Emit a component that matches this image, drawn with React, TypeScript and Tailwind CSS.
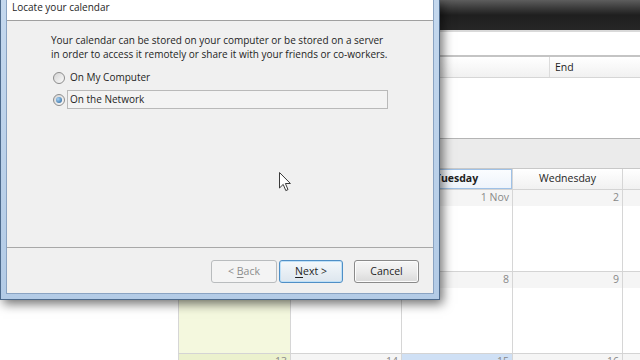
import React from 'react';

const ui = "font-['Open_Sans','Noto_Sans',sans-serif]";

const Radio = ({ checked }: { checked?: boolean }) => (
  <span className="w-[12px] h-[12px] shrink-0 rounded-full border border-[#8c8c8c] bg-gradient-to-br from-[#d4d4d4] to-[#fbfbfb] flex items-center justify-center">
    {checked && (
      <span className="w-[6px] h-[6px] rounded-full bg-[radial-gradient(circle_at_35%_35%,#a7d3f5,#235f98)]" />
    )}
  </span>
);

const WizardButton = ({
  label,
  accessKey,
  rest,
  kind,
}: {
  label?: string;
  accessKey?: string;
  rest?: string;
  kind: 'disabled' | 'default' | 'normal';
}) => {
  const look =
    kind === 'disabled'
      ? 'border-[#b9bcbe] bg-[#f4f4f4] text-[#8d8d8d]'
      : kind === 'default'
        ? 'border-[#4f8fc6] bg-gradient-to-b from-[#f4f8fb] to-[#dde6ee] text-[#1e1e1e] shadow-[inset_0_0_0_1px_#bfe0f7]'
        : 'border-[#8a8a8a] bg-gradient-to-b from-[#f6f6f6] via-[#ebebeb] to-[#dadada] text-[#1e1e1e] shadow-[inset_0_0_0_1px_#fcfcfc]';
  return (
    <button
      type="button"
      className={`w-full h-[23px] rounded-[3px] border text-[10.5px] leading-none flex items-center justify-center ${look}`}
    >
      <span className="whitespace-pre">
        {label}
        {accessKey && <span className="underline underline-offset-[2px]">{accessKey}</span>}
        {rest}
      </span>
    </button>
  );
};

const Cursor = () => (
  <svg width="13" height="20" viewBox="0 0 13 20" className="absolute left-[279px] top-[172px]">
    <path
      d="M0.5 0.5 L0.5 16 L4.2 12.4 L6.8 18.6 L9 17.6 L6.4 11.5 L11.4 11.5 Z"
      fill="#ffffff"
      stroke="#3a3a3a"
      strokeWidth="1"
      strokeLinejoin="round"
    />
  </svg>
);

type Cell = { n: string; tone?: 'weekend' | 'today' };

// cells under the wizard or past the right edge carry no text
const weeks: Cell[][] = [
  [{ n: '', tone: 'weekend' }, { n: '' }, { n: '1 Nov' }, { n: '2' }, { n: '' }],
  [{ n: '', tone: 'weekend' }, { n: '' }, { n: '8' }, { n: '9' }, { n: '' }],
  [{ n: '13', tone: 'weekend' }, { n: '14' }, { n: '15', tone: 'today' }, { n: '16' }, { n: '' }],
];

const days = ['', '', 'Tuesday', 'Wednesday', ''];
const colWidths = ['w-[112px]', 'w-[111px]', 'w-[111px]', 'w-[110px]', 'w-[111px]'];

export default function App() {
  return (
    <div className={`relative w-[640px] h-[360px] overflow-hidden bg-white ${ui}`}>
      {/* calendar app behind the wizard */}
      <div className="flex flex-col h-full">
        <div className="h-[30px] shrink-0 bg-gradient-to-b from-[#5e5e5e] via-[#1f1f1f] to-[#262626]" />
        <div className="h-[27px] shrink-0 border-t-2 border-[#d9d9d9] border-b-2 border-b-[#c4c4c4] bg-white" />
        <div className="h-[21px] shrink-0 flex border-b border-[#d6d6d6] bg-gradient-to-b from-[#ffffff] to-[#f1f1f1] text-[10.5px] text-[#1e1e1e]">
          <div className="w-[550px] shrink-0 border-r border-[#dcdcdc]" />
          <div className="pl-[5px] flex items-center pt-[2px]">End</div>
        </div>
        <div className="h-[60px] shrink-0 bg-white" />
        <div className="h-[30px] shrink-0 border-t border-[#b4b4b4] bg-[#ebebeb]" />
        <div className="flex-1 flex min-h-0">
          <div className="w-[178px] shrink-0 bg-white" />
          <div className="flex flex-col">
            <div className="h-[21px] shrink-0 flex border-t border-[#c8c8c8] text-[10.5px] text-[#1e1e1e]">
              {days.map((d, i) => (
                <div
                  key={i}
                  className={`${colWidths[i]} shrink-0 flex items-center justify-center border-l ${
                    d === 'Tuesday'
                      ? 'font-bold border border-[#9fc1e6] bg-gradient-to-b from-[#fbfdff] to-[#eef4fb]'
                      : 'border-[#d6d6d6] bg-gradient-to-b from-[#ffffff] to-[#f1f1f1]'
                  }`}
                >
                  {d}
                </div>
              ))}
            </div>
            {weeks.map((w, wi) => (
              <div key={wi} className="h-[82px] shrink-0 flex border-t border-[#d4d4d4]">
                {w.map((c, ci) => (
                  <div
                    key={ci}
                    className={`${colWidths[ci]} shrink-0 flex flex-col border-l border-[#d6d6d6] ${
                      c.tone === 'weekend' ? 'bg-[#f4f8de]' : 'bg-white'
                    }`}
                  >
                    <div
                      className={`h-[16px] flex items-center justify-end pr-[3px] text-[10.5px] text-[#888888] ${
                        c.tone === 'weekend'
                          ? 'bg-[#ebf1cd]'
                          : c.tone === 'today'
                            ? 'bg-[#cfe0f5] text-[#6b7a8c]'
                            : 'bg-[#f5f5f5]'
                      }`}
                    >
                      {c.n}
                    </div>
                  </div>
                ))}
              </div>
            ))}
          </div>
        </div>
      </div>

      {/* wizard window */}
      <div className="absolute left-0 top-0 w-[440px] h-[300px] border-x border-b border-[#4d6a8c] bg-gradient-to-b from-[#c4d8ee] to-[#b3cbe6] px-[5px] pb-[5px] shadow-[3px_4px_10px_rgba(0,0,0,0.55)]">
        <div className="h-full flex flex-col border-x border-b border-[#8aa3c2] bg-[#f0f0f0] text-[#1e1e1e]">
          <div className="h-[21px] shrink-0 bg-white border-b border-[#a0a0a0] pl-[5px] text-[10px] leading-[14px]">
            Locate your calendar
          </div>
          <div className="flex-1 flex flex-col pl-[44px] pt-[12px] text-[10px]">
            <p className="leading-[14px] whitespace-nowrap">
              Your calendar can be stored on your computer or be stored on a server
              <br />
              in order to access it remotely or share it with your friends or co-workers.
            </p>
            <div className="mt-[7px] flex flex-col gap-[3px] pl-[2px]">
              <label className="h-[19px] flex items-center gap-[5px]">
                <Radio />
                <span>On My Computer</span>
              </label>
              <label className="h-[19px] flex items-center gap-[2px]">
                <Radio checked />
                <span className="w-[321px] h-[19px] flex items-center pl-[2px] border border-[#b9b9b9] bg-[#f3f3f3]">
                  On the Network
                </span>
              </label>
            </div>
          </div>
          <div className="h-[46px] shrink-0 border-t border-[#a8a8a8] flex items-start justify-end gap-[2px] pt-[12px] pr-[14px]">
            <div className="w-[66px]">
              <WizardButton kind="disabled" label="< " accessKey="B" rest="ack" />
            </div>
            <div className="w-[64px]">
              <WizardButton kind="default" accessKey="N" rest="ext >" />
            </div>
            <div className="w-[65px] ml-[9px]">
              <WizardButton kind="normal" label="Cancel" />
            </div>
          </div>
        </div>
      </div>

      <Cursor />
    </div>
  );
}
